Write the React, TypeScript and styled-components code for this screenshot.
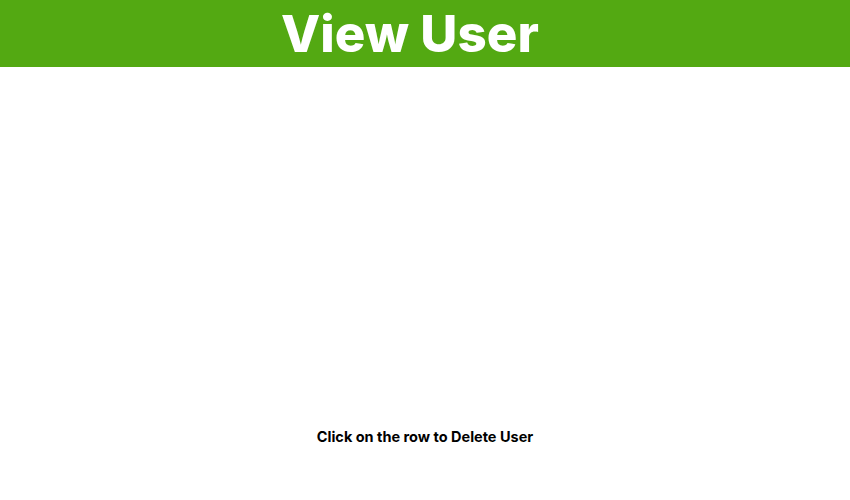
import React from 'react'
import styled, { createGlobalStyle } from 'styled-components'

const GlobalStyle = createGlobalStyle`
  html, body {
    margin: 0;
    padding: 0;
    background: #ffffff;
  }
  body {
    font-family: Inter, 'Noto Sans', sans-serif;
  }
`

export default function App(): JSX.Element {
  return (
    <>
      <GlobalStyle />
      <Page>
        <Header>
          <Title>View User</Title>
        </Header>
        <TableArea />
        <Hint>Click on the row to Delete User</Hint>
      </Page>
    </>
  )
}

const Page = styled.div`
  display: flex;
  flex-direction: column;
  width: 850px;
  height: 500px;
`

const Header = styled.header`
  height: 67px;
  background: #53a912;
  display: flex;
  align-items: center;
  justify-content: center;
  padding-right: 30px;
`

const Title = styled.h1`
  margin: 0;
  color: #ffffff;
  font-family: Inter, sans-serif;
  font-weight: 800;
  font-size: 51px;
  letter-spacing: 0.1px;
`

const TableArea = styled.div`
  height: 358px;
`

const Hint = styled.p`
  margin: 0;
  text-align: center;
  font-family: Inter, sans-serif;
  font-weight: 700;
  font-size: 14.5px;
  color: #000000;
  line-height: 24px;
`
